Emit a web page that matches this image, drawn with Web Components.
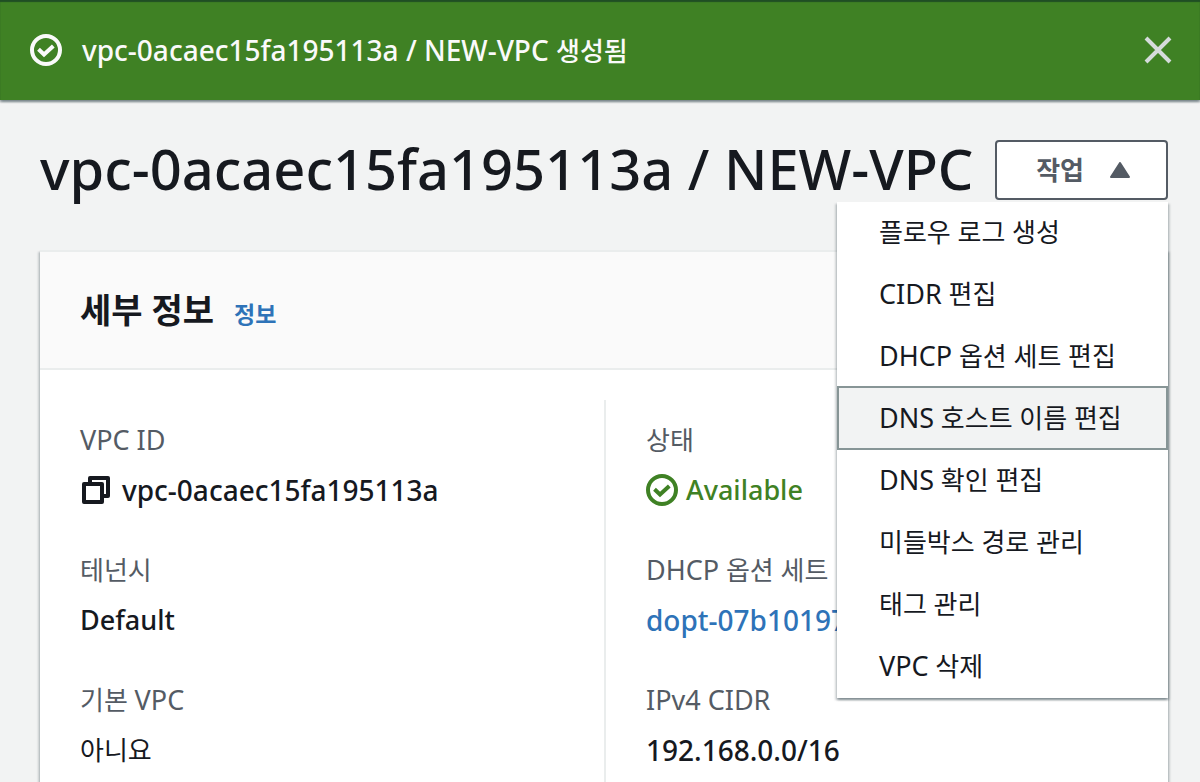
<!DOCTYPE html>
<html lang="ko">
<head>
<meta charset="utf-8">
<meta name="viewport" content="width=device-width, initial-scale=1">
<title>VPC</title>
<style>
  :root {
    --text: #16191f;
    --muted: #545b64;
    --link: #2e73b8;
    --success: #3f8124;
    --line: #eaeded;
    --page: #f2f3f3;
    --shadow: 0 2px 2px 0 rgba(0, 28, 36, .3), 2px 2px 2px 0 rgba(0, 28, 36, .15), -2px 2px 2px 0 rgba(0, 28, 36, .15);
  }
  body {
    margin: 0;
    background: var(--page);
    color: var(--text);
    font: 400 26px/40px "Noto Sans", "Noto Sans CJK KR", sans-serif;
  }
</style>
</head>
<body>
<vpc-page></vpc-page>

<script>
const define = (name, html, setup) => {
  const template = document.createElement('template');
  template.innerHTML = html;
  customElements.define(name, class extends HTMLElement {
    constructor() {
      super();
      this.attachShadow({ mode: 'open' }).append(template.content.cloneNode(true));
      if (setup) setup(this, this.shadowRoot);
    }
  });
};

define('status-icon', `
  <style>
    :host { display: block; flex: none; width: 32px; height: 32px; }
    svg { display: block; width: 100%; height: 100%; }
  </style>
  <svg viewBox="0 0 32 32" fill="none" stroke="currentColor" stroke-width="4" aria-hidden="true">
    <circle cx="16" cy="16" r="14"/><path d="M8.5 15.3 14 20.5 23.3 12"/>
  </svg>`);

define('flash-banner', `
  <style>
    :host { display: flex; align-items: center; gap: 20px; height: 100px; box-sizing: border-box; padding: 0 28px 0 30px;
      background: var(--success); color: #fafafa; font-size: 28px; font-weight: 500;
      box-shadow: inset 0 2px 1px rgba(0, 28, 36, .5), var(--shadow); }
    .message { flex: 1; }
    button { padding: 0; border: 0; background: none; color: #d5dbdb; line-height: 0; cursor: pointer; }
    svg { width: 28px; height: 28px; }
  </style>
  <status-icon></status-icon>
  <div class="message"><slot></slot></div>
  <button type="button" aria-label="닫기">
    <svg viewBox="0 0 28 28" fill="none" stroke="currentColor" stroke-width="4"><path d="M2 2 26 26M26 2 2 26"/></svg>
  </button>`);

define('menu-item', `
  <style>
    :host { display: block; }
    a { display: block; box-sizing: border-box; height: 62px; padding: 0 40px; border: 2px solid transparent; line-height: 56px;
      color: var(--text); text-decoration: none; white-space: nowrap; }
    :host([active]) a { height: 64px; margin-top: -2px; line-height: 60px; border-color: #879596; background: var(--page); }
  </style>
  <a href="#" role="menuitem"><slot></slot></a>`);

define('action-menu', `
  <style>
    :host { display: block; position: relative; flex: none; }
    button { display: flex; align-items: center; gap: 26px; height: 60px; padding: 0 36px 0 39px; border: 2px solid var(--muted);
      border-radius: 4px; background: #fff; color: var(--muted); font: inherit; font-weight: 700; cursor: pointer; }
    svg { display: block; width: 20px; height: 16px; }
    nav { position: absolute; z-index: 1; top: 62px; right: 0; width: 331px; background: #fff; box-shadow: var(--shadow); }
  </style>
  <button type="button" aria-haspopup="true" aria-expanded="true">작업
    <svg viewBox="0 0 20 16" fill="currentColor" stroke="currentColor" stroke-width="2" stroke-linejoin="round" aria-hidden="true"><path d="M10 1 19 15H1Z"/></svg>
  </button>
  <nav role="menu"><slot></slot></nav>`);

define('page-header', `
  <style>
    :host { display: flex; align-items: flex-start; justify-content: space-between; margin: 40px 32px 50px 40px; }
    h1 { margin: 0; font-size: 56px; font-weight: 500; line-height: 56px; white-space: nowrap; }
  </style>
  <h1><slot></slot></h1>
  <slot name="actions"></slot>`);

define('detail-card', `
  <style>
    :host { display: flex; flex-direction: column; flex: 1; margin: 0 32px 0 40px; background: #fff;
      border-top: 2px solid var(--line); box-shadow: var(--shadow); }
    header { display: flex; align-items: baseline; gap: 20px; padding: 34px 40px 34px; background: #fafafa; border-bottom: 2px solid var(--line); }
    h2 { margin: 0; font-size: 34px; line-height: 48px; font-weight: 700; }
    a { color: var(--link); font-size: 23px; font-weight: 700; text-decoration: none; }
    .columns { display: grid; grid-template-columns: 1fr 1fr; flex: 1; padding-top: 30px; }
  </style>
  <header><h2><slot name="title"></slot></h2><a href="#">정보</a></header>
  <div class="columns"><slot></slot></div>`);

define('detail-column', `
  <style>
    :host { display: flex; flex-direction: column; gap: 40px; padding: 20px 40px 12px; }
    :host([divided]) { border-left: 2px solid var(--line); }
  </style>
  <slot></slot>`);

define('detail-field', `
  <style>
    :host { display: block; white-space: nowrap; }
    dl, dd { margin: 0; }
    dt { margin-bottom: 10px; color: var(--muted); }
    dd { display: flex; align-items: center; gap: 8px; }
  </style>
  <dl><dt><slot name="label"></slot></dt><dd><slot></slot></dd></dl>`);

define('copy-button', `
  <style>
    :host { display: block; flex: none; }
    button { display: block; padding: 0 4px 0 2px; margin: 0; border: 0; background: none; color: inherit; line-height: 0; cursor: pointer; }
    svg { width: 28px; height: 28px; }
  </style>
  <button type="button" aria-label="복사">
    <svg viewBox="0 0 28 28" fill="none" stroke="currentColor" stroke-width="4" stroke-linejoin="round"><path d="M2 8H20V26H2Z"/><path d="M8 6V2H26V20H22"/></svg>
  </button>`);

define('vpc-page', `
  <style>
    :host { display: flex; flex-direction: column; min-height: 100vh; }
    .en { font-size: 27px; }
    .word { font-size: 27px; font-weight: 500; }
    .value { font-size: 28px; font-weight: 500; }
    .ko { font-size: 26px; }
    .ok { color: var(--success); }
    a { color: var(--link); text-decoration: none; }
  </style>
  <flash-banner>vpc-0acaec15fa195113a / NEW-VPC <span class="ko">생성됨</span></flash-banner>
  <page-header>vpc-0acaec15fa195113a / NEW-VPC
    <action-menu slot="actions">
      <menu-item>플로우 로그 생성</menu-item>
      <menu-item><span class="en">CIDR</span> 편집</menu-item>
      <menu-item><span class="en">DHCP</span> 옵션 세트 편집</menu-item>
      <menu-item active><span class="en">DNS</span> 호스트 이름 편집</menu-item>
      <menu-item><span class="en">DNS</span> 확인 편집</menu-item>
      <menu-item>미들박스 경로 관리</menu-item>
      <menu-item>태그 관리</menu-item>
      <menu-item><span class="en">VPC</span> 삭제</menu-item>
    </action-menu>
  </page-header>
  <detail-card>
    <span slot="title">세부 정보</span>
    <detail-column>
      <detail-field><span slot="label" class="en">VPC ID</span><copy-button></copy-button><span class="value">vpc-0acaec15fa195113a</span></detail-field>
      <detail-field><span slot="label">테넌시</span><span class="word">Default</span></detail-field>
      <detail-field><span slot="label">기본 <span class="en">VPC</span></span><span>아니요</span></detail-field>
    </detail-column>
    <detail-column divided>
      <detail-field><span slot="label">상태</span><status-icon class="ok"></status-icon><span class="word ok">Available</span></detail-field>
      <detail-field><span slot="label"><span class="en">DHCP</span> 옵션 세트</span><a class="value" href="#">dopt-07b10197</a></detail-field>
      <detail-field><span slot="label" class="en">IPv4 CIDR</span><span class="value">192.168.0.0/16</span></detail-field>
    </detail-column>
  </detail-card>`);
</script>
</body>
</html>
